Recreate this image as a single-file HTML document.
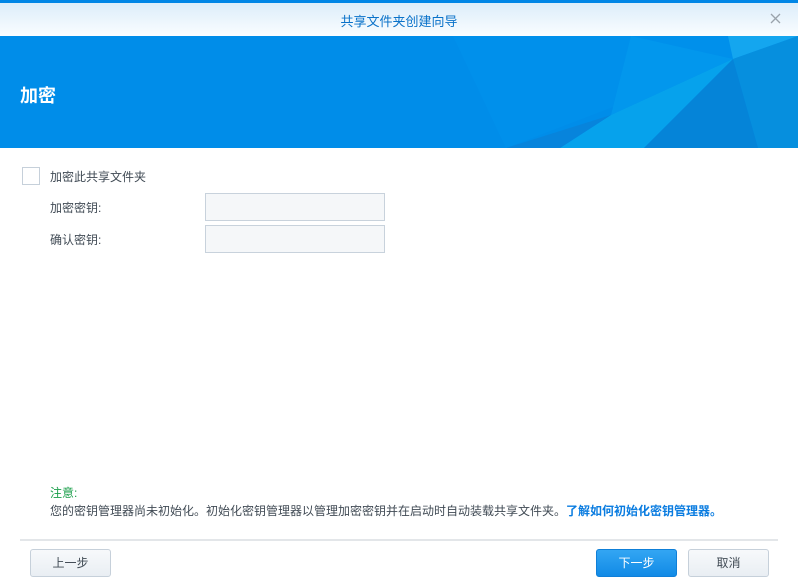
<!DOCTYPE html>
<html><head><meta charset="utf-8"><style>
*{margin:0;padding:0;box-sizing:border-box}
body{width:798px;height:584px;overflow:hidden;background:#fff;font-family:"Liberation Sans","Noto Sans CJK SC",sans-serif;font-size:12px;color:#414b55;position:relative}
.a{position:absolute}
.btn{position:absolute;top:549px;height:28px;width:81px;border:1px solid #c6d0da;border-radius:3px;background:linear-gradient(#f7f9fb,#e9eef3);text-align:center;line-height:26px;font-size:12px;color:#414b55}
.inp{position:absolute;left:205px;width:180px;height:28px;border:1px solid #c8d2dc;background:#f5f7f9}
</style></head><body>
<div class="a" style="left:0;top:0;width:798px;height:3px;background:#0086e6"></div>
<div class="a" style="left:0;top:3px;width:798px;height:33px;background:linear-gradient(#dcedfa,#fafdff)"></div>
<div class="a" style="left:0;top:11px;width:798px;text-align:center;font-size:13px;color:#0a72c9">共享文件夹创建向导</div>
<svg class="a" style="left:770px;top:13px" width="11" height="11"><path d="M1 1L10 10M10 1L1 10" stroke="#9aa3ab" stroke-width="1.3"/></svg>
<svg class="a" style="left:0;top:36px" width="798" height="112">
<rect width="798" height="112" fill="#008de9"/>
<polygon points="453,0 798,0 506,112" fill="#0090eb"/>
<polygon points="631,0 733,23 611,79" fill="#0297ed"/>
<polygon points="611,79 733,23 644,112 560,112" fill="#06a2ec"/>
<polygon points="728,0 798,0 733,23" fill="#14a6ef"/>
<polygon points="798,0 733,23 758,112 798,112" fill="#068fde"/>
<polygon points="733,23 644,112 758,112" fill="#0584d8"/>
<polygon points="506,112 611,79 560,112" fill="#0784dc"/>
</svg>
<div class="a" style="left:20px;top:82px;font-size:18px;font-weight:bold;color:#fff">加密</div>
<div class="a" style="left:22px;top:167px;width:18px;height:18px;border:1px solid #c6d0da;background:#fff"></div>
<div class="a" style="left:50px;top:168px">加密此共享文件夹</div>
<div class="a" style="left:50px;top:199px">加密密钥:</div>
<div class="a" style="left:50px;top:231px">确认密钥:</div>
<div class="inp" style="top:193px"></div>
<div class="inp" style="top:225px"></div>
<div class="a" style="left:50px;top:484px;color:#1a9e4a">注意:</div>
<div class="a" style="left:50px;top:502px;white-space:nowrap">您的密钥管理器尚未初始化。初始化密钥管理器以管理加密密钥并在启动时自动装载共享文件夹。<b style="color:#0a7ce0">了解如何初始化密钥管理器。</b></div>
<div class="a" style="left:20px;top:539px;width:758px;height:2px;background:#e3e6e9"></div>
<div class="btn" style="left:30px">上一步</div>
<div class="btn" style="left:596px;border-color:#0f7fd8;background:linear-gradient(#33a6f3,#118ae6);color:#fff">下一步</div>
<div class="btn" style="left:688px">取消</div>
</body></html>
